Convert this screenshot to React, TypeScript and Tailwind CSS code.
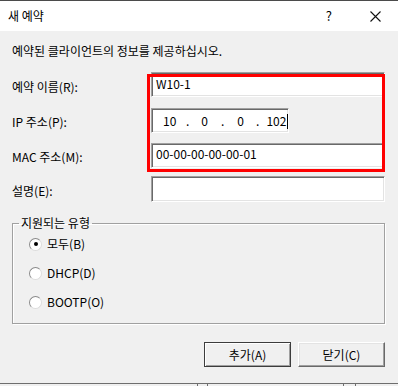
import React from 'react';

const font = { fontFamily: '"Noto Sans CJK KR", "Noto Sans", sans-serif' };

const fieldCls =
  'h-[25px] bg-white border border-t-[#a0a0a0] border-l-[#a0a0a0] border-b-[#ffffff] border-r-[#ffffff] shadow-[inset_1px_1px_0_#696969,inset_-1px_-1px_0_#e3e3e3] text-[12px] leading-[14px] text-black';

const Radio = ({ checked, label }: { checked?: boolean; label: string }) => (
  <div className="flex items-center h-[20px] pl-[16px] gap-[5px]">
    <span className="w-[13px] h-[13px] rounded-full bg-white border border-[#8a8a8a] border-b-[#dcdcdc] border-r-[#dcdcdc] flex items-center justify-center">
      {checked && <span className="w-[4px] h-[4px] rounded-full bg-black" />}
    </span>
    <span className="text-[12px] leading-[16px] text-black">{label}</span>
  </div>
);

export default function App() {
  return (
    <div className="w-[398px] h-[386px] bg-[#f0f0f0] flex flex-col overflow-hidden" style={font}>
      {/* title bar */}
      <div className="h-[31px] bg-white border-t border-[#4b4b4b] flex items-center pl-[8px] shrink-0">
        <span className="text-[12px] leading-[16px] text-black">새 예약</span>
        <span className="ml-auto text-[13px] leading-[16px] text-black mr-[38px]">?</span>
        <svg width="11" height="11" viewBox="0 0 11 11" className="mr-[17px]">
          <path d="M0.5 0.5 L10.5 10.5 M10.5 0.5 L0.5 10.5" stroke="#111" strokeWidth="1.1" />
        </svg>
      </div>

      <div className="flex flex-col px-[12px] pr-[13px]">
        <div className="mt-[12px] h-[16px] text-[12px] leading-[16px] text-black">
          예약된 클라이언트의 정보를 제공하십시오.
        </div>

        {/* form */}
        <div className="relative mt-[13px] flex flex-col">
          <div className="flex items-center">
            <span className="w-[139px] pt-[4px] text-[12px] leading-[16px] text-black">예약 이름(R):</span>
            <div className={`${fieldCls} flex-1 pl-[4px] pt-[4px]`}>W10-1</div>
          </div>
          <div className="flex items-center mt-[11px]">
            <span className="w-[139px] pt-[3px] text-[12px] leading-[16px] text-black">IP 주소(P):</span>
            <div className={`${fieldCls} w-[138px] flex items-center pl-[11px] pt-[1px]`}>
              <span className="w-[13px]">10</span>
              <span className="ml-[10px]">.</span>
              <span className="ml-[12px]">0</span>
              <span className="ml-[13px]">.</span>
              <span className="ml-[13px]">0</span>
              <span className="ml-[12px]">.</span>
              <span className="ml-[7px]">102</span>
              <span className="w-[1px] h-[15px] bg-black ml-[1px]" />
            </div>
          </div>
          <div className="flex items-center mt-[10px]">
            <span className="w-[139px] pt-[2px] text-[12px] leading-[16px] text-black">MAC 주소(M):</span>
            <div className={`${fieldCls} flex-1 pl-[4px] pt-[3px]`}>00-00-00-00-00-01</div>
          </div>
          <div className="flex items-center mt-[8px]">
            <span className="w-[139px] pt-[4px] text-[12px] leading-[16px] text-black">설명(E):</span>
            <div className={`${fieldCls} flex-1 h-[26px]`} />
          </div>

          {/* highlight annotation */}
          <div className="absolute left-[135px] top-[2px] w-[238px] h-[98px] border-[3px] border-[#ff0000] pointer-events-none" />
        </div>

        {/* group */}
        <fieldset className="mt-[13px] h-[109px] border border-[#a0a0a0] shadow-[1px_1px_0_#ffffff,inset_1px_1px_0_#ffffff]">
          <legend className="ml-[6px] px-[2px] text-[12px] leading-[16px] text-black">지원되는 유형</legend>
          <div className="flex flex-col gap-[9px] mt-[3px]">
            <Radio checked label="모두(B)" />
            <Radio label="DHCP(D)" />
            <Radio label="BOOTP(O)" />
          </div>
        </fieldset>

        {/* buttons */}
        <div className="flex justify-end gap-[7px] mt-[18px]">
          <button className="w-[87px] h-[25px] bg-[#f0f0f0] border border-[#3c3c3c] shadow-[inset_1px_1px_0_#ffffff,inset_-1px_-1px_0_#a0a0a0] text-[12px] leading-[16px] text-black">
            추가(A)
          </button>
          <button className="w-[87px] h-[25px] bg-[#f0f0f0] border border-t-[#ffffff] border-l-[#ffffff] border-b-[#696969] border-r-[#696969] shadow-[inset_-1px_-1px_0_#a0a0a0,inset_1px_1px_0_#e3e3e3] text-[12px] leading-[16px] text-black">
            닫기(C)
          </button>
        </div>
      </div>

      {/* edge of the window behind */}
      <div className="mt-auto h-[3px] border-t border-[#6e6e6e] flex shrink-0">
        <span className="ml-[197px] w-[1px] h-[2px] bg-[#6e6e6e]" />
        <span className="ml-[9px] w-[1px] h-[2px] bg-[#6e6e6e]" />
        <span className="ml-[135px] w-[1px] h-[2px] bg-[#6e6e6e]" />
        <span className="ml-[11px] w-[1px] h-[2px] bg-[#6e6e6e]" />
      </div>
    </div>
  );
}
